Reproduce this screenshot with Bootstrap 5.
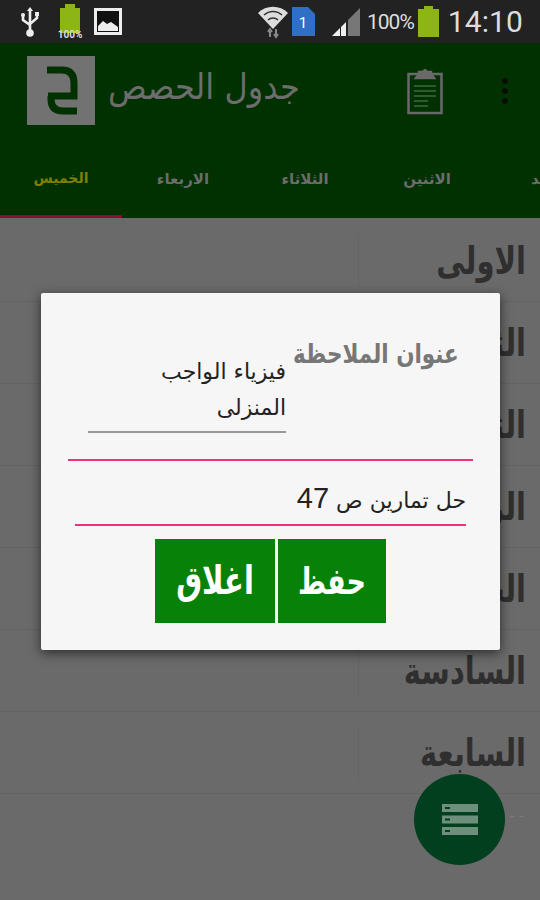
<!DOCTYPE html>
<html lang="ar">
<head>
  <meta charset="UTF-8">
  <meta name="viewport" content="width=device-width, initial-scale=1.0">
  <title>جدول الحصص</title>
  <link rel="stylesheet" href="https://cdn.jsdelivr.net/npm/bootstrap@5.3.0/dist/css/bootstrap.min.css">
  <style>
    body { background: #6a6a6a; font-family: "DejaVu Sans", "Noto Sans", sans-serif; overflow: hidden; }
    .phone { width: 540px; height: 900px; position: relative; overflow: hidden; }
    .status-bar { height: 43px; background: #222; color: #ddd; padding: 0 17px 0 20px; }
    .status-clock { font: 30px "Roboto", sans-serif; letter-spacing: .1px; margin-left: 9px; }
    .status-pct { font: 21px "Roboto", sans-serif; letter-spacing: -1px; margin-left: 7px; margin-right: 4px; }
    .app-bar { height: 175px; background: #013001; }
    .title-row { height: 105px; padding: 13px 31px 0 27px; }
    .app-logo { width: 68px; height: 69px; background: #727272; }
    .app-title { font: 32px "DejaVu Sans", sans-serif; color: #6d6d6d; margin-left: 13px; line-height: 62px; display: inline-block; transform: scaleY(1.1); }
    .tabs-row { height: 70px; position: relative; overflow: hidden; white-space: nowrap; }
    .tab-item { flex: 0 0 122px; text-align: center; padding-top: 20px; font-size: 15px; font-weight: bold; color: #6c6c6c; }
    .tab-item.is-active { font-size: 14px; color: #7f7f00; }
    .tab-line { position: absolute; left: 0; bottom: 0; width: 122px; height: 3px; background: #8a0f30; }
    .period-list { padding-top: 2px; }
    .period-row { height: 82px; border-bottom: 1px solid #636363; padding-right: 14px; position: relative; }
    .period-name { font: bold 29px "DejaVu Sans", sans-serif; color: #2f2f2f; line-height: 82px; display: inline-block; transform: scaleY(1.3); }
    .period-dash { font-size: 14px; color: #7c7c7c; line-height: 44px; }
    .period-divider { position: absolute; left: 358px; top: 14px; bottom: 14px; width: 1px; background: #646464; }
    .note-dialog { position: absolute; left: 41px; top: 293px; width: 459px; height: 357px; background: #f6f6f6; border-radius: 2px; box-shadow: 0 3px 12px rgba(0,0,0,.6); }
    .note-label { position: absolute; left: 252px; top: 48px; font: bold 21.500px "DejaVu Sans", sans-serif; color: #777; white-space: nowrap; transform: scaleY(1.25); }
    .note-title { position: absolute; left: 47px; top: 58px; width: 198px; height: 82px; padding-top: 3px; border-bottom: 2px solid #999; font-size: 22px; line-height: 36px; color: #222; text-align: right; }
    .pink-line { position: absolute; height: 2px; background: #f0307a; }
    .line-top { left: 27px; width: 405px; top: 166px; }
    .line-bottom { left: 34px; width: 391px; top: 231px; }
    .note-body { position: absolute; left: 34px; right: 34px; top: 188px; font: 22px/40px "DejaVu Sans", sans-serif; color: #222; text-align: right; }
    .note-num { font: 29px "Liberation Sans", sans-serif; }
    .note-btns { position: absolute; left: 114px; top: 246px; gap: 3px; }
    .note-btn { height: 84px; background: #078107; color: #fff; font: bold 29px "DejaVu Sans", sans-serif; border-radius: 0; border: 0; padding: 0; }
    .note-btn span { display: inline-block; transform: scaleY(1.35); }
    .btn-close-note { width: 120px; }
    .btn-save-note { width: 108px; font-size: 27px; }
    .fab-btn { position: absolute; left: 414px; top: 774px; width: 91px; height: 91px; border-radius: 50%; background: #013f1e; }
  </style>
</head>
<body>
  <div class="phone">
    <div class="status-bar d-flex align-items-center">
      <svg width="20" height="30" viewBox="0 0 20 30" fill="none" stroke="#eee" stroke-width="2.600"><path d="M10 4v22M3 8v5l7 5M17 8v3l-7 6"/><circle cx="10" cy="26" r="2.500" fill="#eee"/><path d="M10 0l3 4H7z" fill="#eee" stroke="none"/><circle cx="3" cy="8" r="2" fill="#eee" stroke="none"/><rect x="15" y="5" width="4" height="4" fill="#eee" stroke="none"/></svg>
      <svg style="margin-left:17px" width="26" height="36" viewBox="0 0 26 36"><path d="M8 0h10v4h5v25H3V4h5z" fill="#8db516"/><text x="13" y="34" font-size="10" font-weight="bold" font-family="Roboto" fill="#ddd" text-anchor="middle">100%</text></svg>
      <svg style="margin-left:11px" width="28" height="28" viewBox="0 0 28 28"><rect x="1.500" y="1.500" width="25" height="24" fill="#111" stroke="#eee" stroke-width="3"/><path d="M4 23V18l5-5 4 3 4-2 7 5v4z" fill="#eee"/></svg>
      <div class="ms-auto d-flex align-items-center">
        <svg width="30" height="34" viewBox="0 0 30 34"><path d="M15 24L0 8a21 21 0 0 1 30 0z" fill="#ddd"/><path d="M6 10a13 13 0 0 1 18 0M10 15a7 7 0 0 1 10 0" fill="none" stroke="#333" stroke-width="1.500"/><path d="M12 24v8M18 32v-8M10 27l2-3 2 3M16 29l2 3 2-3" fill="none" stroke="#888" stroke-width="2"/></svg>
        <svg style="margin-left:4px" width="23" height="29" viewBox="0 0 23 29"><path d="M0 0h16l7 7v22H0z" fill="#2f6fc8"/><text x="11" y="21" font-size="15" font-family="Roboto" fill="#fff" text-anchor="middle">1</text></svg>
        <svg style="margin-left:17px" width="28" height="28" viewBox="0 0 28 28"><path d="M0 28l8-8v8zM9 28v-9l5-5v14z" fill="#eee"/><path d="M16 28V12l12-12v28z" fill="#777"/></svg>
        <span class="status-pct">100%</span>
        <svg width="21" height="31" viewBox="0 0 21 31"><path d="M6 0h9v3h6v28H0V3h6z" fill="#8db516"/></svg>
        <span class="status-clock">14:10</span>
      </div>
    </div>
    <div class="app-bar">
      <div class="title-row d-flex align-items-start">
        <div class="app-logo d-flex align-items-center justify-content-center">
          <svg width="36" height="50" viewBox="0 0 36 50" fill="none" stroke="#013001" stroke-width="7"><path d="M4 4h15q12 0 12 13v13H5"/><path d="M8 30v3q0 12 12 12h14"/></svg>
        </div>
        <div class="app-title">جدول الحصص</div>
        <svg class="ms-auto" style="margin-top:13px" width="36" height="46" viewBox="0 0 36 46" fill="none" stroke="#6a6a6a" stroke-width="2.500"><rect x="1.500" y="5" width="33" height="39"/><path d="M12 5V3h4l2-2 2 2h4v2l3 4H9z" fill="#6a6a6a"/><path d="M7 17h22M7 22h22M7 27h22M7 32h14M7 37h14" stroke="#2f5a2f" stroke-width="2"/></svg>
        <svg style="margin:21px 0 0 58px" width="8" height="28" viewBox="0 0 8 28" fill="#0a0a0a"><circle cx="4" cy="4" r="2.800"/><circle cx="4" cy="14" r="2.800"/><circle cx="4" cy="24" r="2.800"/></svg>
      </div>
      <div class="tabs-row d-flex">
        <div class="tab-item is-active">الخميس</div>
        <div class="tab-item">الاربعاء</div>
        <div class="tab-item">الثلاثاء</div>
        <div class="tab-item">الاثنين</div>
        <div class="tab-item">الاحد</div>
        <div class="tab-line"></div>
      </div>
    </div>
    <div class="period-list">
      <div class="period-row text-end"><div class="period-divider"></div><span class="period-name">الاولى</span></div>
      <div class="period-row text-end"><div class="period-divider"></div><span class="period-name">الثانية</span></div>
      <div class="period-row text-end"><div class="period-divider"></div><span class="period-name">الثالثة</span></div>
      <div class="period-row text-end"><div class="period-divider"></div><span class="period-name">الرابعة</span></div>
      <div class="period-row text-end"><div class="period-divider"></div><span class="period-name">الخامسة</span></div>
      <div class="period-row text-end"><div class="period-divider"></div><span class="period-name">السادسة</span></div>
      <div class="period-row text-end"><div class="period-divider"></div><span class="period-name">السابعة</span></div>
      <div class="text-end pe-3 period-dash">- -</div>
    </div>
    <div class="note-dialog">
      <div class="note-label">عنوان الملاحظة</div>
      <div class="note-title">فيزياء الواجب<br>المنزلى</div>
      <div class="pink-line line-top"></div>
      <div class="note-body">حل تمارين ص <span class="note-num">47</span></div>
      <div class="pink-line line-bottom"></div>
      <div class="note-btns d-flex">
        <button class="btn note-btn btn-close-note"><span>اغلاق</span></button>
        <button class="btn note-btn btn-save-note"><span>حفظ</span></button>
      </div>
    </div>
    <div class="fab-btn d-flex align-items-center justify-content-center">
      <svg width="36" height="31" viewBox="0 0 36 31"><path d="M0 0h36v8H0zM0 11.500h36v8H0zM0 23h36v8H0z" fill="#6f8f7d"/><path d="M3 3h5v2H3zM3 14.500h5v2H3zM3 26h5v2H3z" fill="#013f1e"/></svg>
    </div>
  </div>
  <script src="https://cdn.jsdelivr.net/npm/bootstrap@5.3.0/dist/js/bootstrap.bundle.min.js"></script>
</body>
</html>
